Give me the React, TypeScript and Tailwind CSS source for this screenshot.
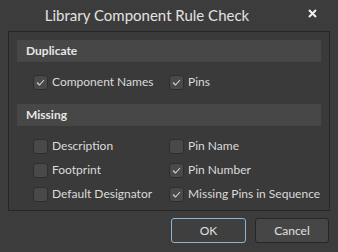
import React from "react";

const font = { fontFamily: 'Lato, "Open Sans", "Liberation Sans", sans-serif' };

function Check({ checked }: { checked?: boolean }) {
  return (
    <div className="w-[15px] h-[15px] shrink-0 rounded-[3px] border border-[#2e2e2e] bg-[#494949] flex items-center justify-center">
      {checked && (
        <svg width="9" height="7" viewBox="0 0 9 7" fill="none">
          <polyline points="1,3.5 3.5,6 8,1" stroke="#d6d6d6" strokeWidth="1.1" />
        </svg>
      )}
    </div>
  );
}

function Option({ label, checked }: { label: string; checked?: boolean }) {
  return (
    <div className="h-[24px] flex items-center gap-[4px]">
      <Check checked={checked} />
      <span className="text-[12px] text-[#dadada] leading-none whitespace-nowrap">{label}</span>
    </div>
  );
}

function SectionHeader({ title }: { title: string }) {
  return (
    <div className="h-[22px] bg-[#474747] flex items-center pl-[9px] text-[12px] font-bold text-[#e6e6e6]">
      {title}
    </div>
  );
}

export default function App() {
  return (
    <div className="w-[338px] h-[252px] bg-[#3c3c3c] flex flex-col" style={font}>
      <div className="h-[31px] flex items-center shrink-0">
        <div className="w-[294px] text-center text-[15px] text-[#e2e2e2] pb-[1px] whitespace-nowrap">
          Library Component Rule Check
        </div>
        <div className="ml-[14px] mb-[5px]">
          <svg width="9" height="9" viewBox="0 0 9 9">
            <path d="M1 1 L8 8 M8 1 L1 8" stroke="#f0f0f0" strokeWidth="2" />
          </svg>
        </div>
      </div>

      <div className="mx-[8px] h-[180px] border border-[#262626] bg-[#3a3a3a] px-[8px] pt-[8px]">
        <SectionHeader title="Duplicate" />
        <div className="grid grid-cols-[136px_1fr] pl-[16px] mt-[8px]">
          <Option label="Component Names" checked />
          <Option label="Pins" checked />
        </div>

        <div className="mt-[10px]">
          <SectionHeader title="Missing" />
        </div>
        <div className="grid grid-cols-[136px_1fr] pl-[16px] mt-[8px]">
          <Option label="Description" />
          <Option label="Pin Name" />
          <Option label="Footprint" />
          <Option label="Pin Number" checked />
          <Option label="Default Designator" />
          <Option label="Missing Pins in Sequence" checked />
        </div>
      </div>

      <div className="flex justify-end gap-[9px] pr-[9px] mt-[7px]">
        <button className="w-[75px] h-[25px] rounded-[3px] border border-[#8fb3cf] bg-[#3f3f3f] text-[12px] text-[#e0e0e0]">
          OK
        </button>
        <button className="w-[74px] h-[25px] rounded-[3px] border border-[#262626] bg-[#464646] text-[12px] text-[#e0e0e0]">
          Cancel
        </button>
      </div>
    </div>
  );
}
